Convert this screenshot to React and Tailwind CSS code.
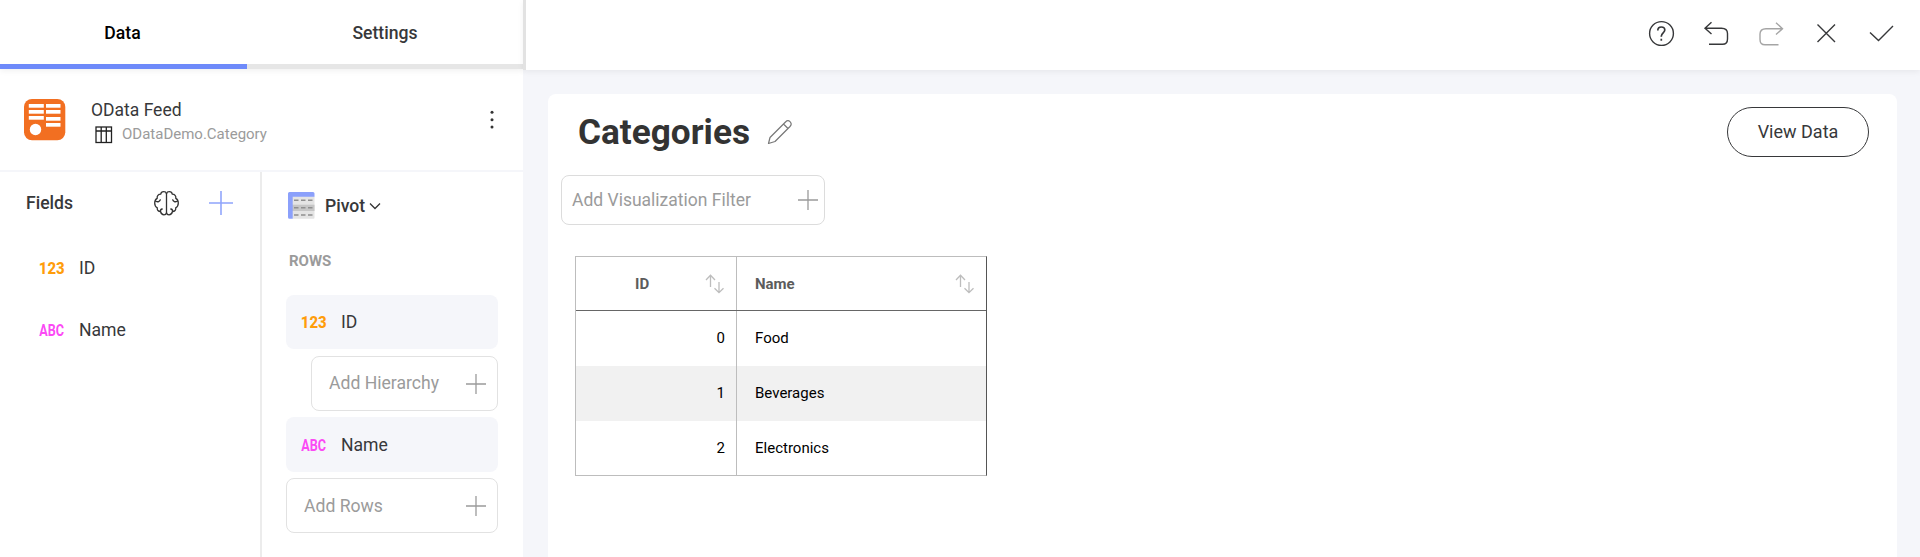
import React from "react";

function Plus({ className, size = 20 }) {
  return (
    <svg className={className} width={size} height={size} viewBox="0 0 20 20" fill="none" stroke="currentColor" strokeWidth="1.3">
      <path d="M10 0V20M0 10H20" />
    </svg>
  );
}

function FeedIcon() {
  return (
    <svg width="42" height="42" viewBox="0 0 42 42" className="shrink-0">
      <rect x="0" y="0" width="41.3" height="41.3" rx="8" fill="#f26f21" />
      <g fill="#fff">
        <rect x="4.8" y="5" width="15" height="3.7" />
        <rect x="4.8" y="11" width="15" height="3.7" />
        <rect x="4.8" y="17" width="15" height="3.7" />
        <rect x="22" y="5" width="14.5" height="3.7" />
        <rect x="22" y="11" width="14.5" height="3.7" />
        <rect x="22" y="18" width="14.5" height="3.7" />
        <rect x="22" y="24" width="14.5" height="3.7" />
        <circle cx="11.5" cy="30.5" r="5.7" />
      </g>
    </svg>
  );
}

function TableIcon() {
  return (
    <svg width="18" height="18" viewBox="0 0 18 18" fill="none" stroke="#222" strokeWidth="1.3" className="shrink-0">
      <rect x="1" y="1" width="15.5" height="15.5" />
      <path d="M1 5H16.5M6.2 1V16.5M11.3 1V16.5" />
    </svg>
  );
}

function BrainIcon() {
  const half =
    "M12.5 2.6C12 1 10.7 .7 9.7 .7C8 .7 6.9 1.7 6.7 3.2C4.3 3.2 2.8 4.9 3.2 7.4C1.4 8.3 .7 10 .7 12C.7 14.4 1.7 16 3.3 16.8C2.9 19 4.3 20.5 6.5 20.5C7 22.6 8.3 23.8 10 23.8C11.3 23.8 12.2 23 12.5 22M2 10.3C3.8 11.3 5.8 10.5 6.3 8.8M6.5 20.5C6.3 19 7 18.2 8.2 18";
  return (
    <svg width="25" height="25" viewBox="0 0 25 25" fill="none" stroke="#333" strokeWidth="1.3" strokeLinecap="round" strokeLinejoin="round">
      <path d={half} />
      <path d={half} transform="matrix(-1 0 0 1 25 0)" />
      <path d="M12.5 2.5V22" />
    </svg>
  );
}

function PivotIcon() {
  return (
    <svg width="27" height="27" viewBox="0 0 27 27" className="shrink-0">
      <rect x="4" y="4" width="22.5" height="22.7" rx="1" fill="#e4e4e4" />
      <rect x="4" y="12.7" width="22.5" height="6.3" fill="#c6c6c6" />
      <path d="M0 1.5Q0 0 1.5 0H25Q26.5 0 26.5 1.5V4.7H4.7V26.7H1.5Q0 26.7 0 25.2Z" fill="#8ba0fb" />
      <path d="M6 8.3H10.5M13 8.3H17.5M20 8.3H24.5M6 15.7H10.5M13 15.7H17.5M20 15.7H24.5M6 23H10.5M13 23H17.5M20 23H24.5" stroke="#8f8f8f" strokeWidth="1.5" />
    </svg>
  );
}

function SortIcon() {
  return (
    <svg width="20" height="20" viewBox="0 0 20 20" fill="none" stroke="#bdbdbd" strokeWidth="1.3" className="shrink-0">
      <path d="M5.5 13V1.5M1 6L5.5 1.3L10 6M14 8V18.5M9.5 14.2L14 18.7L18.5 14.2" />
    </svg>
  );
}

function TypeTag({ kind }) {
  return kind === "123" ? (
    <span className="flex w-[26px] justify-center">
      <span className="block scale-x-[0.88] text-[17px] leading-5 font-extrabold text-[#ff9d0a]">123</span>
    </span>
  ) : (
    <span className="flex w-[26px] justify-center">
      <span className="block scale-x-[0.74] text-[17px] leading-5 font-bold text-[#fb4af5]">ABC</span>
    </span>
  );
}

function TableRow({ id, name, shaded, last }) {
  return (
    <div className={(last ? "h-[54px] " : "h-[55px] ") + (shaded ? "flex items-center bg-[#f1f1f1]" : "flex items-center bg-white")}>
      <div className="flex h-full w-[161px] items-center justify-end border-r border-[#bdbdbd] pr-[11px]">{id}</div>
      <div className="pl-[18px]">{name}</div>
    </div>
  );
}

export default function App() {
  return (
    <div className="flex h-[557px] w-[1920px] overflow-hidden bg-[#f5f6fa] font-[Roboto,sans-serif] text-[17.6px] text-[#37383a]">
      <aside className="flex w-[523px] shrink-0 flex-col bg-white">
        <div className="flex h-[69px] shrink-0 font-medium shadow-[0_2px_6px_rgba(0,0,0,0.06)]">
          <div className="flex w-[247px] items-center justify-center border-b-[5px] border-[#6e8afa] pr-[2px] pt-0.5 text-black">Data</div>
          <div className="flex flex-1 items-center justify-center border-b-[5px] border-[#e6e6e6] pt-0.5">Settings</div>
        </div>
        <div className="flex h-[103px] shrink-0 items-start border-b-2 border-[#f5f6fa] pl-6 pt-[30px]">
          <FeedIcon />
          <div className="flex flex-1 flex-col pl-[25px]">
            <div className="pt-px text-[17.5px] leading-[21px]">OData Feed</div>
            <div className="flex items-center gap-[10px] pl-[4px] pt-[3px]">
              <TableIcon />
              <span className="-ml-px pb-0.5 text-[15px] leading-5 text-[#9b9b9b]">ODataDemo.Category</span>
            </div>
          </div>
          <svg width="6" height="20" viewBox="0 0 6 20" fill="#333" className="mr-7 mt-[11px]">
            <circle cx="3" cy="2.3" r="1.5" />
            <circle cx="3" cy="9.7" r="1.5" />
            <circle cx="3" cy="17" r="1.5" />
          </svg>
        </div>
        <div className="flex flex-1">
          <section className="w-[262px] border-r-2 border-[#ececec]">
            <div className="flex h-[62px] items-center pl-[26px] pr-[27px]">
              <span className="flex-1 pt-px font-medium">Fields</span>
              <BrainIcon />
              <Plus size={24} className="ml-[30px] text-[#8fa4fb]" />
            </div>
            <div className="flex h-[67px] items-center gap-[14px] pl-[39px]">
              <TypeTag kind="123" />
              <span className="pt-0.5">ID</span>
            </div>
            <div className="flex h-[57px] items-center gap-[14px] pl-[39px]">
              <TypeTag kind="ABC" />
              <span className="pt-0.5">Name</span>
            </div>
          </section>
          <section className="flex-1 pl-6 pr-[25px]">
            <div className="flex items-center pl-0.5 pt-5">
              <PivotIcon />
              <span className="pl-[10px] pt-0.5 font-medium leading-[25px]">Pivot</span>
              <svg width="12" height="8" viewBox="0 0 12 8" fill="none" stroke="#333" strokeWidth="1.3" className="ml-1">
                <path d="M1 1.5L6 6.5L11 1.5" />
              </svg>
            </div>
            <div className="mt-8 pl-[3px] text-[15px] leading-5 font-bold text-[#9b9b9b]">ROWS</div>
            <div className="mt-6 flex h-[54px] items-center gap-[14px] rounded-lg bg-[#f5f6fa] pl-[15px]">
              <TypeTag kind="123" />
              <span>ID</span>
            </div>
            <div className="ml-[25px] mt-[7px] flex h-[55px] items-center justify-between rounded-lg border border-[#e2e2e2] pl-[17px] pr-[11px] text-[#9b9b9b]">
              <span className="pb-px">Add Hierarchy</span>
              <Plus />
            </div>
            <div className="mt-1.5 flex h-[55px] items-center gap-[14px] rounded-lg bg-[#f5f6fa] pl-[15px]">
              <TypeTag kind="ABC" />
              <span className="pt-0.5">Name</span>
            </div>
            <div className="mt-1.5 flex h-[55px] items-center justify-between rounded-lg border border-[#e2e2e2] pl-[17px] pr-[11px] text-[#9b9b9b]">
              <span className="pt-px">Add Rows</span>
              <Plus />
            </div>
          </section>
        </div>
      </aside>

      <main className="flex flex-1 flex-col">
        <header className="flex h-[70px] shrink-0 items-center justify-end border-l-[3px] border-[#e2e2e2] bg-white pr-[25px] pb-[3px] shadow-[0_2px_6px_rgba(0,0,0,0.06)]">
          <div className="flex gap-7 text-[#37383a]">
            <svg width="27" height="27" viewBox="0 0 27 27" fill="none" stroke="currentColor" strokeWidth="1.4">
              <circle cx="13.5" cy="13.5" r="11.9" />
              <path d="M9.8 10.5C9.8 8.2 11.3 7 13.3 7C15.4 7 16.8 8.3 16.8 10.1C16.8 12.6 13.3 13.2 13.3 16.2V16.8M13.3 18.8V20.8" strokeWidth="1.7" />
            </svg>
            <svg width="27" height="27" viewBox="0 0 27 27" fill="none" stroke="currentColor" strokeWidth="1.4">
              <path d="M8.5 2.200L2 8.200L8.500 14M2 8.200H18.500C22.500 8.200 24.500 10.500 24.500 13.500V19C24.500 22.500 22.500 24.300 19.500 24.300H6" />
            </svg>
            <svg width="27" height="27" viewBox="0 0 27 27" fill="none" stroke="#a5a5a5" strokeWidth="1.4">
              <path d="M18 2.700L24.500 8.700L18 14.500M24.500 8.700H8C4 8.700 2 11 2 14V19.500C2 23 4 24.800 7 24.800H20.500" />
            </svg>
            <svg width="27" height="27" viewBox="0 0 27 27" fill="none" stroke="currentColor" strokeWidth="1.4">
              <path d="M4.500 4.500L22 22M22 4.500L4.500 22" />
            </svg>
            <svg width="27" height="27" viewBox="0 0 27 27" fill="none" stroke="currentColor" strokeWidth="1.4">
              <path d="M2 12.5L10.5 20.5L25 6" />
            </svg>
          </div>
        </header>
        <div className="ml-[25px] mr-[23px] mt-6 flex-1 rounded-t-lg bg-white">
          <div className="flex h-[75px] items-center pl-[30px] pr-7">
            <h1 className="text-[35.2px] leading-10 font-bold text-[#333]">Categories</h1>
            <svg width="26" height="26" viewBox="0 0 26 26" fill="none" stroke="#777" strokeWidth="1.2" strokeLinejoin="round" className="ml-[17px]">
              <path d="M1.5 24.5L3 18.5L18.5 3C20 1.5 21.5 1.3 23 2.6C24.7 4.300 24.7 5.700 23 7.500L8 22.500ZM16.500 5L21 9.500" />
            </svg>
            <div className="flex-1" />
            <button className="h-[50px] w-[142px] rounded-full border-[1.5px] border-[#37383a] text-[18px]">View Data</button>
          </div>
          <div className="ml-[13px] mt-1.5 flex h-[50px] w-[264px] items-center justify-between rounded-lg border border-[#dcdcdc] pl-[10px] pr-[6px] text-[#9b9b9b]">
            <span className="text-[17.5px]">Add Visualization Filter</span>
            <Plus />
          </div>
          <div className="ml-[27px] mt-[31px] w-[412px] border border-[#bdbdbd] border-r-[#555] text-[15px] text-black">
            <div className="flex h-[54px] items-center border-b border-[#666] font-bold text-[#5c5c5c]">
              <div className="flex h-full w-[161px] items-center border-r border-[#bdbdbd] pl-[59px] pr-[11px]">
                <span className="flex-1 pt-0.5">ID</span>
                <SortIcon />
              </div>
              <div className="flex flex-1 items-center pl-[18px] pr-[11px]">
                <span className="flex-1 pt-0.5">Name</span>
                <SortIcon />
              </div>
            </div>
            <TableRow id="0" name="Food" />
            <TableRow id="1" name="Beverages" shaded />
            <TableRow id="2" name="Electronics" last />
          </div>
        </div>
      </main>
    </div>
  );
}
